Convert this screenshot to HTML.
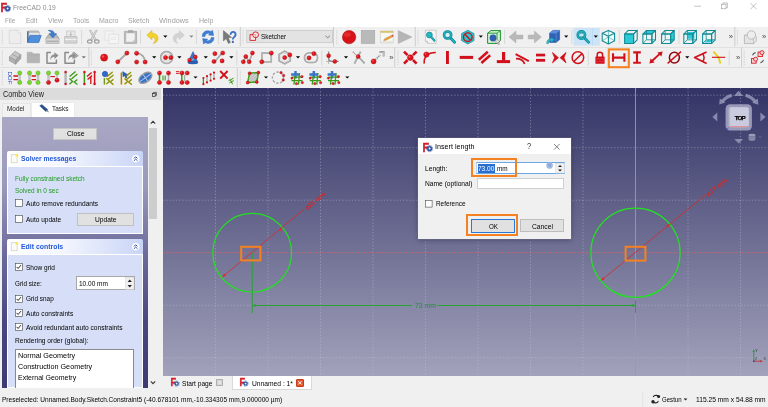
<!DOCTYPE html>
<html><head><meta charset="utf-8"><title>FreeCAD 0.19</title>
<style>
html,body{margin:0;padding:0;}
body{width:768px;height:407px;overflow:hidden;background:#f0f0f0;position:relative;font-family:"Liberation Sans",sans-serif;}
.a{position:absolute;box-sizing:border-box;}
.t{position:absolute;white-space:nowrap;transform-origin:0 50%;}
svg{position:absolute;overflow:visible;}
</style></head><body><div id="app" style="position:absolute;left:0;top:0;width:768px;height:407px;will-change:transform;">
<div class="a" style="left:0px;top:0px;width:768px;height:26.5px;background:#fff;"></div>
<svg style="left:1px;top:2px" width="10.0" height="10.0" viewBox="0 0 10 10"><text transform="translate(-0.5 9.6) scale(0.86 1)" font-family="Liberation Sans, sans-serif" font-weight="bold" font-size="12.6" fill="#d4202a" stroke="#d4202a" stroke-width="0.5">F</text><circle cx="6.6" cy="6.6" r="2.6" fill="#2f55a4"/><circle cx="6.6" cy="6.6" r="3.1" fill="none" stroke="#2f55a4" stroke-width="0.9" stroke-dasharray="1 0.9"/><circle cx="6.6" cy="6.6" r="1" fill="#fff"/></svg>
<span class="t" style="left:12.80px;top:3.00px;font-size:8.0px;line-height:9.60px;color:#8c8c8c;transform:scaleX(0.8351);">FreeCAD 0.19</span>
<span class="t" style="left:4.75px;top:16.00px;font-size:8.0px;line-height:9.60px;color:#a0a0a0;transform:scaleX(0.7952);">File</span>
<span class="t" style="left:25.75px;top:16.00px;font-size:8.0px;line-height:9.60px;color:#a0a0a0;transform:scaleX(0.8161);">Edit</span>
<span class="t" style="left:47.50px;top:16.00px;font-size:8.0px;line-height:9.60px;color:#a0a0a0;transform:scaleX(0.8723);">View</span>
<span class="t" style="left:72.50px;top:16.00px;font-size:8.0px;line-height:9.60px;color:#a0a0a0;transform:scaleX(0.8701);">Tools</span>
<span class="t" style="left:99.25px;top:16.00px;font-size:8.0px;line-height:9.60px;color:#a0a0a0;transform:scaleX(0.8774);">Macro</span>
<span class="t" style="left:128.25px;top:16.00px;font-size:8.0px;line-height:9.60px;color:#a0a0a0;transform:scaleX(0.8689);">Sketch</span>
<span class="t" style="left:159.25px;top:16.00px;font-size:8.0px;line-height:9.60px;color:#a0a0a0;transform:scaleX(0.9167);">Windows</span>
<span class="t" style="left:198.75px;top:16.00px;font-size:8.0px;line-height:9.60px;color:#a0a0a0;transform:scaleX(0.8813);">Help</span>
<svg style="left:0;top:0" width="768" height="14" viewBox="0 0 768 14" fill="none" stroke="#9a9a9a" stroke-width="0.6"><path d="M694.3 6.2H701"/><rect x="721.4" y="4.2" width="4.6" height="4.6"/><path d="M722.9 4.2V3H727.4V7.6H726"/><path d="M750.5 3.2L756.5 9.2M756.5 3.2L750.5 9.2"/></svg>
<div class="a" style="left:0px;top:26.5px;width:768px;height:61.5px;background:#f0f0f0;"></div>
<div class="a" style="left:0px;top:46.6px;width:768px;height:0.6000000000000014px;background:#e0e0e0;"></div>
<div class="a" style="left:0px;top:67.2px;width:768px;height:0.5999999999999943px;background:#e0e0e0;"></div>
<div class="a" style="left:0px;top:88px;width:161px;height:12px;background:#dcdcdc;"></div>
<span class="t" style="left:2.60px;top:90.00px;font-size:8.2px;line-height:9.84px;color:#222;transform:scaleX(0.8849);">Combo View</span>
<svg style="left:152.4px;top:92.2px" width="5" height="5" viewBox="0 0 7 7" fill="none" stroke="#333" stroke-width="1"><rect x="0.5" y="2.2" width="4" height="4"/><path d="M2 2.2V0.6H6.2V4.8H4.5"/></svg>
<div class="a" style="left:0px;top:100px;width:161px;height:17px;background:#f0f0f0;"></div>
<div class="a" style="left:31px;top:101.5px;width:44px;height:15.5px;background:#fff;border:0.5px solid #ebebeb;border-bottom:none;"></div>
<div class="a" style="left:1.5px;top:103px;width:29.5px;height:13.5px;background:#f2f2f2;border:0.5px solid #e6e6e6;border-bottom:none;"></div>
<span class="t" style="left:7.00px;top:104.00px;font-size:7.6px;line-height:9.12px;color:#222;transform:scaleX(0.8455);">Model</span>
<span class="t" style="left:51.50px;top:104.00px;font-size:7.8px;line-height:9.36px;color:#222;transform:scaleX(0.8276);">Tasks</span>
<svg style="left:39px;top:103.6px" width="11" height="10" viewBox="0 0 11 10"><path d="M0.6 1.8L2.8 0.4L8.8 5.6L6.6 7.4Z" fill="#2a4f8f" stroke="#1d3a70" stroke-width="0.3"/><path d="M7 7.2L8.6 5.8L10 8.4Z" fill="#8a8a8a"/></svg>
<div class="a" style="left:2px;top:117px;width:145.5px;height:270.5px;background:linear-gradient(#a9a8c4 0%,#9b99bb 25%,#6e6c9c 50%,#4b4880 75%,#3d3a72 100%);"></div>
<div class="a" style="left:147.5px;top:117px;width:10.0px;height:270.5px;background:#f0f0f0;"></div>
<div class="a" style="left:148.5px;top:127.5px;width:8.0px;height:91.5px;background:#cdcdcd;"></div>
<svg style="left:147.5px;top:117px" width="10" height="271" viewBox="0 0 10 271" fill="none" stroke="#3a3a3a" stroke-width="1.1"><path d="M2.8 6.6L5 4.4L7.2 6.6"/><path d="M2.8 264.4L5 266.6L7.2 264.4"/></svg>
<div class="a" style="left:53px;top:127.8px;width:43.8px;height:12.000000000000014px;background:#e1e1e1;border:0.5px solid #c4c4c4;"></div>
<span class="t" style="left:66.50px;top:129.00px;font-size:7.6px;line-height:9.12px;color:#000;transform:scaleX(0.9007);">Close</span>
<div class="a" style="left:7px;top:151px;width:135.5px;height:14.5px;background:linear-gradient(90deg,#ffffff 0%,#f4f6fe 40%,#c9d5f7 100%);border-radius:2px 2px 0 0;"></div>
<div class="a" style="left:7px;top:165.5px;width:135.5px;height:68.5px;background:#d6dff7;border:0.6px solid #fff;border-top:0.5px solid #fff;"></div>
<svg style="left:11px;top:153.65px" width="8" height="9" viewBox="0 0 8 9"><path d="M0.3 0.6H6.2V8.6H0.3Z" fill="#fbfbf6" stroke="#b9b9b0" stroke-width="0.5"/><path d="M4.6 0.2H7.2V2.6H4.6Z" fill="#f6ea4a"/></svg>
<span class="t" style="left:20.80px;top:154.00px;font-size:7.8px;line-height:9.36px;color:#2157d6;font-weight:bold;transform:scaleX(0.8661);">Solver messages</span>
<svg style="left:130.8px;top:153.75px" width="9.4" height="9.4" viewBox="0 0 8 8"><circle cx="4" cy="4" r="3.6" fill="#fff" stroke="#b7c6ee" stroke-width="0.5"/><path d="M2.5 3.8L4 2.3L5.5 3.8M2.5 5.8L4 4.3L5.5 5.8" fill="none" stroke="#1f3f9f" stroke-width="0.8"/></svg>
<div class="a" style="left:7px;top:239.4px;width:135.5px;height:14.400000000000006px;background:linear-gradient(90deg,#ffffff 0%,#f4f6fe 40%,#c9d5f7 100%);border-radius:2px 2px 0 0;"></div>
<div class="a" style="left:7px;top:253.8px;width:135.5px;height:134.2px;background:#d6dff7;border:0.6px solid #fff;border-top:0.5px solid #fff;"></div>
<svg style="left:11px;top:242.00000000000003px" width="8" height="9" viewBox="0 0 8 9"><path d="M0.3 0.6H6.2V8.6H0.3Z" fill="#fbfbf6" stroke="#b9b9b0" stroke-width="0.5"/><path d="M4.6 0.2H7.2V2.6H4.6Z" fill="#f6ea4a"/></svg>
<span class="t" style="left:20.80px;top:242.00px;font-size:7.8px;line-height:9.36px;color:#2157d6;font-weight:bold;transform:scaleX(0.8853);">Edit controls</span>
<svg style="left:130.8px;top:242.10000000000002px" width="9.4" height="9.4" viewBox="0 0 8 8"><circle cx="4" cy="4" r="3.6" fill="#fff" stroke="#b7c6ee" stroke-width="0.5"/><path d="M2.5 3.8L4 2.3L5.5 3.8M2.5 5.8L4 4.3L5.5 5.8" fill="none" stroke="#1f3f9f" stroke-width="0.8"/></svg>
<span class="t" style="left:14.80px;top:174.00px;font-size:7.6px;line-height:9.12px;color:#1f9a1f;transform:scaleX(0.8550);">Fully constrained sketch</span>
<span class="t" style="left:14.80px;top:186.00px;font-size:7.6px;line-height:9.12px;color:#1f9a1f;transform:scaleX(0.8479);">Solved in 0 sec</span>
<svg style="left:15.2px;top:198.79999999999998px" width="7.6" height="7.6" viewBox="0 0 7.6 7.6"><rect x="0.3" y="0.3" width="7" height="7" fill="#fff" stroke="#444" stroke-width="0.6"/></svg>
<span class="t" style="left:25.80px;top:199.00px;font-size:7.6px;line-height:9.12px;color:#000;transform:scaleX(0.8676);">Auto remove redundants</span>
<svg style="left:15.2px;top:214.79999999999998px" width="7.6" height="7.6" viewBox="0 0 7.6 7.6"><rect x="0.3" y="0.3" width="7" height="7" fill="#fff" stroke="#444" stroke-width="0.6"/></svg>
<span class="t" style="left:25.80px;top:215.00px;font-size:7.6px;line-height:9.12px;color:#000;transform:scaleX(0.8588);">Auto update</span>
<div class="a" style="left:77px;top:212.5px;width:57.19999999999999px;height:13.099999999999994px;background:#e1e1e1;border:0.5px solid #c0c0c0;"></div>
<span class="t" style="left:95.00px;top:215.00px;font-size:7.6px;line-height:9.12px;color:#000;transform:scaleX(0.8774);">Update</span>
<svg style="left:15.2px;top:263.2px" width="7.6" height="7.6" viewBox="0 0 7.6 7.6"><rect x="0.3" y="0.3" width="7" height="7" fill="#fff" stroke="#444" stroke-width="0.6"/><path d="M1.6 3.9L3.1 5.5L6 2.1" fill="none" stroke="#111" stroke-width="0.9"/></svg>
<span class="t" style="left:25.80px;top:263.00px;font-size:7.6px;line-height:9.12px;color:#000;transform:scaleX(0.8581);">Show grid</span>
<span class="t" style="left:14.80px;top:279.00px;font-size:7.6px;line-height:9.12px;color:#000;transform:scaleX(0.8319);">Grid size:</span>
<div class="a" style="left:76.3px;top:276.2px;width:58.500000000000014px;height:13.600000000000023px;background:#fff;border:0.5px solid #a8a8a8;"></div>
<span class="t" style="left:79.00px;top:279.00px;font-size:7.6px;line-height:9.12px;color:#000;transform:scaleX(0.8583);">10.00 mm</span>
<svg style="left:125px;top:277px" width="9.5" height="13" viewBox="0 0 9.5 13"><rect x="0.5" y="0.5" width="8.5" height="12" fill="#f0f0f0" stroke="#c8c8c8" stroke-width="0.4"/><path d="M2.6 4.9L4.75 2.4L6.9 4.9Z M2.6 8.1L4.75 10.6L6.9 8.1Z" fill="#222"/></svg>
<svg style="left:15.2px;top:294.59999999999997px" width="7.6" height="7.6" viewBox="0 0 7.6 7.6"><rect x="0.3" y="0.3" width="7" height="7" fill="#fff" stroke="#444" stroke-width="0.6"/><path d="M1.6 3.9L3.1 5.5L6 2.1" fill="none" stroke="#111" stroke-width="0.9"/></svg>
<span class="t" style="left:25.80px;top:294.00px;font-size:7.6px;line-height:9.12px;color:#000;transform:scaleX(0.8407);">Grid snap</span>
<svg style="left:15.2px;top:308.8px" width="7.6" height="7.6" viewBox="0 0 7.6 7.6"><rect x="0.3" y="0.3" width="7" height="7" fill="#fff" stroke="#444" stroke-width="0.6"/><path d="M1.6 3.9L3.1 5.5L6 2.1" fill="none" stroke="#111" stroke-width="0.9"/></svg>
<span class="t" style="left:25.80px;top:309.00px;font-size:7.6px;line-height:9.12px;color:#000;transform:scaleX(0.8662);">Auto constraints</span>
<svg style="left:15.2px;top:322.8px" width="7.6" height="7.6" viewBox="0 0 7.6 7.6"><rect x="0.3" y="0.3" width="7" height="7" fill="#fff" stroke="#444" stroke-width="0.6"/><path d="M1.6 3.9L3.1 5.5L6 2.1" fill="none" stroke="#111" stroke-width="0.9"/></svg>
<span class="t" style="left:25.80px;top:323.00px;font-size:7.6px;line-height:9.12px;color:#000;transform:scaleX(0.8696);">Avoid redundant auto constraints</span>
<span class="t" style="left:14.80px;top:336.00px;font-size:7.6px;line-height:9.12px;color:#000;transform:scaleX(0.8700);">Rendering order (global):</span>
<div class="a" style="left:15.3px;top:348.7px;width:119.2px;height:39.30000000000001px;background:#fff;border:0.5px solid #8a8a8a;border-bottom:none;"></div>
<span class="t" style="left:17.80px;top:351.00px;font-size:7.8px;line-height:9.36px;color:#000;transform:scaleX(0.9294);">Normal Geometry</span>
<span class="t" style="left:17.80px;top:362.00px;font-size:7.8px;line-height:9.36px;color:#000;transform:scaleX(0.9253);">Construction Geometry</span>
<span class="t" style="left:17.80px;top:373.00px;font-size:7.8px;line-height:9.36px;color:#000;transform:scaleX(0.8951);">External Geometry</span>
<div class="a" style="left:0px;top:387.6px;width:163px;height:19.399999999999977px;background:#f0f0f0;"></div>
<div class="a" style="left:0px;top:390px;width:768px;height:17px;background:#f0f0f0;"></div>
<span class="t" style="left:1.50px;top:396.00px;font-size:7.4px;line-height:8.88px;color:#000;transform:scaleX(0.8868);">Preselected: Unnamed.Body.Sketch.Constraint5 (-40.678101 mm,-10.334305 mm,9.000000 µm)</span>
<span class="t" style="left:696.00px;top:396.00px;font-size:7.4px;line-height:8.88px;color:#000;transform:scaleX(0.9031);">115.25 mm x 54.88 mm</span>
<span class="t" style="left:662.40px;top:396.00px;font-size:7.4px;line-height:8.88px;color:#000;transform:scaleX(0.8216);">Gestun</span>
<svg style="left:640px;top:392px" width="50" height="15" viewBox="0 0 50 15"><path d="M2.7 0V15" stroke="#dcdcdc" stroke-width="0.7"/><path d="M13.4 5.2C13 3.4 16.5 2.8 18.4 4M18 9C18.6 10.8 14.8 11.4 13 10.2" fill="none" stroke="#222" stroke-width="1.1"/><circle cx="18.6" cy="4.6" r="1.5" fill="#222"/><circle cx="13" cy="9.8" r="1.7" fill="#222"/><path d="M43.6 6.6H47.4L45.5 8.6Z" fill="#222"/></svg>
<div class="a" style="left:163px;top:376px;width:605px;height:14px;background:#f0f0f0;"></div>
<div class="a" style="left:231.5px;top:375.6px;width:80.10000000000002px;height:14.0px;background:#fff;border:0.5px solid #d9d9d9;border-top:none;"></div>
<svg style="left:170.5px;top:378.2px" width="8.5" height="8.5" viewBox="0 0 10 10"><text transform="translate(-0.5 9.6) scale(0.86 1)" font-family="Liberation Sans, sans-serif" font-weight="bold" font-size="12.6" fill="#d4202a" stroke="#d4202a" stroke-width="0.5">F</text><circle cx="6.6" cy="6.6" r="2.6" fill="#2f55a4"/><circle cx="6.6" cy="6.6" r="3.1" fill="none" stroke="#2f55a4" stroke-width="0.9" stroke-dasharray="1 0.9"/><circle cx="6.6" cy="6.6" r="1" fill="#fff"/></svg>
<span class="t" style="left:182.30px;top:380.00px;font-size:7.4px;line-height:8.88px;color:#000;transform:scaleX(0.8904);">Start page</span>
<div class="a" style="left:216px;top:379px;width:7.300000000000011px;height:7.399999999999977px;background:#d4d4d4;border:0.5px solid #b0b0b0;"></div>
<svg style="left:216px;top:379px" width="7.3" height="7.4" viewBox="0 0 7.3 7.4"><path d="M2.2 2.2L5.1 5.2M5.1 2.2L2.2 5.2" stroke="#f4f4f4" stroke-width="0.9"/></svg>
<svg style="left:240px;top:378.2px" width="8.5" height="8.5" viewBox="0 0 10 10"><text transform="translate(-0.5 9.6) scale(0.86 1)" font-family="Liberation Sans, sans-serif" font-weight="bold" font-size="12.6" fill="#d4202a" stroke="#d4202a" stroke-width="0.5">F</text><circle cx="6.6" cy="6.6" r="2.6" fill="#2f55a4"/><circle cx="6.6" cy="6.6" r="3.1" fill="none" stroke="#2f55a4" stroke-width="0.9" stroke-dasharray="1 0.9"/><circle cx="6.6" cy="6.6" r="1" fill="#fff"/></svg>
<span class="t" style="left:251.80px;top:380.00px;font-size:7.4px;line-height:8.88px;color:#000;transform:scaleX(0.9061);">Unnamed : 1*</span>
<div class="a" style="left:296px;top:379px;width:7.800000000000011px;height:7.600000000000023px;background:#e4572e;border:0.5px solid #c43c1a;border-radius:1px;"></div>
<svg style="left:296px;top:379px" width="7.8" height="7.6" viewBox="0 0 7.8 7.6"><path d="M2.3 2.2L5.5 5.4M5.5 2.2L2.3 5.4" stroke="#fff" stroke-width="1"/></svg>
<div class="a" style="left:163px;top:88px;width:605px;height:288px;background:linear-gradient(#333366 0%,#a2a2bb 100%);"></div>
<svg style="left:0;top:0" width="768" height="407" viewBox="0 0 768 407"><g stroke="#c2c2d8" stroke-opacity="0.62" stroke-width="0.7" stroke-dasharray="1.3 1.9" fill="none"><path d="M215.5 88V376"/><path d="M268.0 88V376"/><path d="M320.5 88V376"/><path d="M373.0 88V376"/><path d="M425.5 88V376"/><path d="M478.0 88V376"/><path d="M530.5 88V376"/><path d="M583.0 88V376"/><path d="M688.0 88V376"/><path d="M740.5 88V376"/><path d="M163 95.2H768"/><path d="M163 147.7H768"/><path d="M163 200.2H768"/><path d="M163 305.2H252.2M635.5 305.2H768"/><path d="M163 357.7H768"/></g><path d="M163 252.7H768" stroke="#e0605c" stroke-width="0.7" stroke-dasharray="1.8 1.2"/><path d="M635.5 88V376" stroke="#57c86a" stroke-width="0.9"/><circle cx="252.2" cy="252.7" r="39.4" fill="none" stroke="#22e022" stroke-width="1.25"/><circle cx="635.5" cy="252.7" r="44.6" fill="none" stroke="#22e022" stroke-width="1.25"/><g stroke="#d62a2a" stroke-width="0.8" fill="#e22"><path d="M222.4 276.9L304 209.2"/><path d="M222.4 276.9l3.4 -1.2l-1.8 -2.2Z" stroke="none"/><path d="M282 227.9l-3.4 1.2l1.8 2.2Z" stroke="none"/><path d="M601.3 280.4L705 195.3"/><path d="M601.3 280.4l3.4 -1.2l-1.8 -2.2Z" stroke="none"/><path d="M669.7 224.3l-3.4 1.2l1.8 2.2Z" stroke="none"/></g><text x="0" y="0" transform="translate(306.6 210.4) rotate(-38.5)" font-family="Liberation Sans, sans-serif" font-size="6.6" font-weight="bold" fill="#cc2c2c">⌀15 mm</text><text x="0" y="0" transform="translate(708.4 196.6) rotate(-38.5)" font-family="Liberation Sans, sans-serif" font-size="6.6" font-weight="bold" fill="#cc2c2c">⌀17 mm</text><g stroke="#27a432" stroke-width="1" fill="#27a432"><path d="M252.2 252.7V313"/><path d="M252.2 305.5H412.3"/><path d="M437.6 305.5H635.5"/><path d="M635.5 300V313" /><path d="M252.2 305.5l3.6 -1.5v3Z" stroke="none"/><path d="M635.5 305.5l-3.6 -1.5v3Z" stroke="none"/></g><text x="425.4" y="308" text-anchor="middle" font-family="Liberation Sans, sans-serif" font-size="7" fill="#22903a" textLength="21" lengthAdjust="spacingAndGlyphs">73 mm</text><path d="M250 246.8h3" stroke="#d33" stroke-width="0.8"/><path d="M633 246.8h3" stroke="#d33" stroke-width="0.8"/><g fill="none" stroke="#f58220" stroke-width="2"><rect x="241.2" y="246.8" width="19.2" height="13.6"/><rect x="625.6" y="246.8" width="19.8" height="13.8"/></g><g fill="#a6a6c6" fill-opacity="0.72" stroke="none"><path d="M738.5 90.8L733.9 95.9H743.1Z"/><path d="M738.7 143.4L734.3 138.9H743.1Z"/><path d="M712.4 117L717.3 112.4V121.5Z"/><path d="M765.6 117L760.4 112.4V121.5Z"/></g><g fill="none" stroke="#a6a6c6" stroke-opacity="0.72" stroke-width="3"><path d="M722.4 101.2A20 20 0 0 1 731.8 95.3"/><path d="M755.2 101.4A20 20 0 0 0 745.6 95.3"/></g><g fill="#a6a6c6" fill-opacity="0.72"><path d="M719.2 104.6L719.8 98.4L725.4 102.6Z"/><path d="M758.4 104.8L757.8 98.6L752.2 102.8Z"/></g><rect x="725.6" y="104.2" width="26.3" height="26.3" rx="4.5" fill="#b4b4d0" fill-opacity="0.78"/><rect x="729" y="107.4" width="19.5" height="19.6" rx="1.6" fill="#cfcfe2" fill-opacity="0.92" stroke="#e6e6f2" stroke-opacity="0.7" stroke-width="0.5"/><path d="M729.6 107.6V126.4" stroke="#5fdc6a" stroke-width="0.7"/><path d="M729.6 126.6H748" stroke="#ee7070" stroke-width="0.7"/><text x="739.7" y="119.6" text-anchor="middle" font-family="Liberation Sans, sans-serif" font-size="6.2" font-weight="bold" fill="#000" letter-spacing="-0.9" stroke="#000" stroke-width="0.25">TOP</text><path d="M728.4 127.8l-2.6 2.6" stroke="#2a2ae0" stroke-width="0.8"/><g><ellipse cx="752" cy="135.2" rx="3.4" ry="1.4" fill="#9c9cba"/><path d="M748.6 135.2V139.6A3.4 1.4 0 0 0 755.4 139.6V135.2A3.4 1.4 0 0 1 748.6 135.2Z" fill="#8686a6"/><path d="M758.2 136.2h3.6l-1.8 2Z" fill="#606082"/></g><path d="M753.8 351V361.2" stroke="#1a9a2a" stroke-width="0.8"/><path d="M753.8 361.2H761" stroke="#c22" stroke-width="0.8"/><path d="M753.8 349.6l-1.2 2.2h2.4Z" fill="#1a9a2a"/><path d="M762.6 361.2l-2.2 -1.2v2.4Z" fill="#c22"/><circle cx="753.8" cy="361.2" r="0.8" fill="#22c"/><text x="755.2" y="351.6" font-family="Liberation Sans, sans-serif" font-size="3.6" fill="#222">Y</text><text x="763.4" y="360.4" font-family="Liberation Sans, sans-serif" font-size="3.6" fill="#333">X</text><text x="755" y="360" font-family="Liberation Sans, sans-serif" font-size="3.2" fill="#333">Z</text></svg>
<div class="a" style="left:418px;top:137.6px;width:153.20000000000005px;height:101.4px;background:#f0f0f0;box-shadow:0 0 0 0.5px rgba(120,120,150,0.7),0 1px 5px rgba(0,0,20,0.35);"></div>
<div class="a" style="left:418px;top:137.6px;width:153.20000000000005px;height:16.900000000000006px;background:#fff;"></div>
<svg style="left:423px;top:141.5px" width="10.0" height="10.0" viewBox="0 0 10 10"><text transform="translate(-0.5 9.6) scale(0.86 1)" font-family="Liberation Sans, sans-serif" font-weight="bold" font-size="12.6" fill="#d4202a" stroke="#d4202a" stroke-width="0.5">F</text><circle cx="6.6" cy="6.6" r="2.6" fill="#2f55a4"/><circle cx="6.6" cy="6.6" r="3.1" fill="none" stroke="#2f55a4" stroke-width="0.9" stroke-dasharray="1 0.9"/><circle cx="6.6" cy="6.6" r="1" fill="#fff"/></svg>
<span class="t" style="left:434.50px;top:142.00px;font-size:7.8px;line-height:9.36px;color:#000;transform:scaleX(0.9202);">Insert length</span>
<span class="t" style="left:527.00px;top:141.00px;font-size:8.4px;line-height:10.08px;color:#333;transform:scaleX(0.8991);">?</span>
<svg style="left:553px;top:143px" width="8" height="8" viewBox="0 0 8 8"><path d="M1 1L6.6 6.6M6.6 1L1 6.6" stroke="#333" stroke-width="0.6"/></svg>
<span class="t" style="left:425.00px;top:164.00px;font-size:7.6px;line-height:9.12px;color:#000;transform:scaleX(0.8795);">Length:</span>
<div class="a" style="left:476px;top:162.2px;width:88.5px;height:11.800000000000011px;background:#fff;border:0.6px solid #6aa7e8;border-left-color:#b9d4f2;border-right-color:#b9d4f2;"></div>
<div class="a" style="left:477.6px;top:163.8px;width:17.299999999999955px;height:9.0px;background:#2a6fd0;"></div>
<span class="t" style="left:478.20px;top:164.00px;font-size:7.6px;line-height:9.12px;color:#fff;transform:scaleX(0.8571);">73.00</span>
<span class="t" style="left:497.00px;top:164.00px;font-size:7.6px;line-height:9.12px;color:#000;transform:scaleX(0.8451);">mm</span>
<svg style="left:545.5px;top:163.2px" width="19" height="10.5" viewBox="0 0 19 10.5"><circle cx="3.6" cy="2.4" r="3.1" fill="#b4c8e8" stroke="#8aa6d6" stroke-width="0.5"/><path d="M1.4 1.6h4.4M1.4 3.2h4.4M2.8 0v4.6M4.4 0v4.6" stroke="#5f86c8" stroke-width="0.4"/><rect x="9.7" y="0.3" width="8.6" height="9.8" fill="#f0f0f0" stroke="#c8c8c8" stroke-width="0.4"/><path d="M12 4L14 1.9L16 4Z M12 6.4L14 8.5L16 6.4Z" fill="#222"/></svg>
<span class="t" style="left:425.00px;top:179.00px;font-size:7.6px;line-height:9.12px;color:#000;transform:scaleX(0.8786);">Name (optional)</span>
<div class="a" style="left:476.7px;top:177.6px;width:87.80000000000001px;height:11.200000000000017px;background:#fff;border:0.5px solid #d0d0d0;"></div>
<svg style="left:425.4px;top:199.70000000000002px" width="7.4" height="7.4" viewBox="0 0 7.6 7.6"><rect x="0.3" y="0.3" width="7" height="7" fill="#fff" stroke="#444" stroke-width="0.6"/></svg>
<span class="t" style="left:436.00px;top:199.00px;font-size:7.6px;line-height:9.12px;color:#000;transform:scaleX(0.8414);">Reference</span>
<div class="a" style="left:471px;top:219.2px;width:44px;height:13.400000000000006px;background:#e1e1e1;border:0.8px solid #2a78d7;"></div>
<span class="t" style="left:488.50px;top:222.00px;font-size:7.6px;line-height:9.12px;color:#000;transform:scaleX(0.8196);">OK</span>
<div class="a" style="left:519.8px;top:219.4px;width:44.10000000000002px;height:13.099999999999994px;background:#e1e1e1;border:0.5px solid #bdbdbd;"></div>
<span class="t" style="left:531.50px;top:222.00px;font-size:7.6px;line-height:9.12px;color:#000;transform:scaleX(0.8877);">Cancel</span>
<div class="a" style="left:471px;top:157.9px;width:46.200000000000045px;height:19.5px;border:2.3px solid #f58220;"></div>
<div class="a" style="left:465.8px;top:214.2px;width:52.19999999999999px;height:22.200000000000017px;border:2.3px solid #f58220;"></div>
<svg style="left:0;top:0" width="768" height="88" viewBox="0 0 768 88"><path d="M2.3 30V45" stroke="#b8b8b8" stroke-width="0.7" stroke-dasharray="0.8 0.9"/><path d="M9.3 30.2H18.2L20.8 32.8V43.6H9.3Z" fill="#ededed" stroke="#cfcfcf" stroke-width="0.6"/><path d="M18.2 30.2V32.8H20.8" fill="#fafafa" stroke="#cfcfcf" stroke-width="0.5"/><path d="M28 31H38.5V41H28Z" fill="#c9c9c9" stroke="#8a8a8a" stroke-width="0.5"/><path d="M29 32.4H39.5V41H29Z" fill="#e6e6e6" stroke="#9a9a9a" stroke-width="0.4"/><path d="M27 31.2V42.6H38.6L41.3 35.4H30L28.4 38.6V31.2Z" fill="#3e74c0"/><path d="M27.6 42.6L30 35.4H41.3L38.8 42.6Z" fill="#4f8fdc" stroke="#2c5ea8" stroke-width="0.4"/><path d="M46 38.2L48.6 34.6H56.4L59 38.2V43.2H46Z" fill="#b9b9b9" stroke="#7d7d7d" stroke-width="0.5"/><path d="M46.4 38.6H58.6V42.8H46.4Z" fill="#d8d8d8"/><path d="M47 41.2H58" stroke="#8d8d8d" stroke-width="0.8"/><path d="M48.2 30.4C51.5 30 54 31 54.4 33.6H56.6L52.8 38L49 33.6H51.4C51 32 50 31 48.2 30.4Z" fill="#3f7fd0" stroke="#2558a0" stroke-width="0.4"/><path d="M66.6 31H75V37H66.6Z" fill="#e9e9e9" stroke="#b5b5b5" stroke-width="0.5"/><path d="M64.6 36.6H77V43.2H64.6Z" fill="#d5d5d5" stroke="#a5a5a5" stroke-width="0.5"/><path d="M65 39.4H76.6" stroke="#f4f4f4" stroke-width="1"/><path d="M70.8 32V35.4M69.4 34L70.8 35.6L72.2 34" stroke="#aaa" stroke-width="0.7" fill="none"/><path d="M81.6 30V44" stroke="#cfcfcf" stroke-width="0.7"/><g fill="#e2e2e2" stroke="#a2a2a2" stroke-width="0.6"><path d="M89.4 30.4L91 30.4L96.4 39.8L94.6 40Z"/><path d="M97.2 30.4L95.6 30.4L90.2 39.8L92 40Z"/></g><g fill="none" stroke="#9a9a9a" stroke-width="1.1"><ellipse cx="89.8" cy="41.6" rx="2.3" ry="1.7"/><ellipse cx="96.8" cy="41.6" rx="2.3" ry="1.7"/></g><path d="M105 31H113.6V40.4H105Z" fill="#f2f2f2" stroke="#dcdcdc" stroke-width="0.6"/><path d="M109 34.4H118.6V43.6H109Z" fill="#f5f5f5" stroke="#d6d6d6" stroke-width="0.6"/><path d="M111 37.4H116.4M111 39.4H116.4" stroke="#e0e0e0" stroke-width="0.6"/><path d="M124.4 31.4H136.6V43.4H124.4Z" fill="#bdbdbd" stroke="#9a9a9a" stroke-width="0.6"/><path d="M126 33H135V42H126Z" fill="#f1f1f1" stroke="#b5b5b5" stroke-width="0.4"/><path d="M128 30.2H133V32.6H128Z" fill="#a5a5a5"/><path d="M132 42L135 39V42Z" fill="#c9c9c9"/><path d="M140.5 30V44" stroke="#cfcfcf" stroke-width="0.7"/><path d="M146.8 35.2L152 30.6V33.2C156 33.2 158.2 35.6 158 38.8C157.8 41.4 155.8 43 153 43.4C155 42 155.6 40.2 154.8 38.8C154.2 37.6 153.2 37.2 152 37.2V39.8Z" fill="#f3d22a" stroke="#d2a90e" stroke-width="0.5"/><path d="M163.20000000000002 35.6H167.4L165.3 37.800000000000004Z" fill="#000"/><path d="M184.4 35.2L179.2 30.6V33.2C175.2 33.2 173 35.6 173.2 38.8C173.4 41.4 175.4 43 178.2 43.4C176.2 42 175.6 40.2 176.4 38.8C177 37.6 178 37.2 179.2 37.2V39.8Z" fill="#d3d3d3" stroke="#c2c2c2" stroke-width="0.4"/><path d="M189.3 35.6H193.5L191.4 37.800000000000004Z" fill="#8a8a8a"/><path d="M196.4 30V44" stroke="#cfcfcf" stroke-width="0.7"/><g fill="#3d7fd6" stroke="#2a5fae" stroke-width="0.4"><path d="M202.2 36.6C202.2 32.6 205 30.6 208.6 30.8L211 31.4L212.6 30.2L213.6 35.6L208.4 35L210 33.6C207.4 32.8 205.4 34 205 36.6Z"/><path d="M214 37.6C214 41.6 211.2 43.6 207.6 43.4L205.2 42.8L203.6 44L202.6 38.6L207.8 39.2L206.2 40.6C208.8 41.4 210.8 40.2 211.2 37.6Z"/></g><path d="M218.4 30V44" stroke="#cfcfcf" stroke-width="0.7"/><path d="M223.4 30.6L223.4 41L226.2 38.6L228.4 43.4L230.4 42.4L228.2 37.8L231.6 37.4Z" fill="#7a7a7a" stroke="#555" stroke-width="0.4"/><text transform="translate(233.2 42.8) scale(0.82 1)" text-anchor="middle" font-family="Liberation Sans, sans-serif" font-size="16.5" font-weight="bold" fill="#3a6fc4">?</text><path d="M240.3 27V46.4" stroke="#c4c4c4" stroke-width="0.8"/><path d="M243 30V45" stroke="#b8b8b8" stroke-width="0.7" stroke-dasharray="0.8 0.9"/><rect x="246.8" y="30.3" width="85.9" height="12.5" fill="#e3e3e3" stroke="#b5b5b5" stroke-width="0.5"/><g fill="none" stroke="#d21a22" stroke-width="0.9"><path d="M250 34.6H255.6V40.4H250Z" fill="#fbeaea"/><circle cx="255.6" cy="34.8" r="2.9" fill="#fbeaea" fill-opacity="0.6"/></g><path d="M325.4 35.6L327.7 37.9L330 35.6" fill="none" stroke="#555" stroke-width="0.7"/><path d="M333.5 27V46.4" stroke="#c4c4c4" stroke-width="0.8"/><path d="M336.8 30V45" stroke="#b8b8b8" stroke-width="0.7" stroke-dasharray="0.8 0.9"/><circle cx="349.1" cy="37.1" r="6.7" fill="#d81118" stroke="#a8080c" stroke-width="0.5"/><ellipse cx="347.4" cy="34.6" rx="3.6" ry="2.4" fill="#f04a4a" fill-opacity="0.45"/><rect x="361.2" y="30.4" width="13.6" height="13.2" fill="#b9b9b9" stroke="#a2a2a2" stroke-width="0.5"/><path d="M380.4 31H393.2V42.8H380.4Z" fill="#f7f7f3" stroke="#bdbdb2" stroke-width="0.5"/><path d="M380.4 31H393.2V32.8H380.4Z" fill="#d9c36a"/><path d="M384.6 38.8L391.6 35.2L392.8 36.8L385.6 40.4L383.6 40.6Z" fill="#e8a23a" stroke="#a8661a" stroke-width="0.3"/><path d="M391.6 35.2L392.4 34.6L393.6 36.2L392.8 36.8Z" fill="#d33"/><path d="M381.6 41.4H392" stroke="#d0d0c8" stroke-width="0.5"/><path d="M398.2 30.6L412 37.1L398.2 43.6Z" fill="#b5b5b5" stroke="#a5a5a5" stroke-width="0.4"/><path d="M415.3 27V46.4" stroke="#c4c4c4" stroke-width="0.8"/><path d="M418 30V45" stroke="#b8b8b8" stroke-width="0.7" stroke-dasharray="0.8 0.9"/><path d="M425.4 30.2H436.2V43.4H427.6L425.4 41.2Z" fill="#f4f4f4" stroke="#a8a8a8" stroke-width="0.5"/><path d="M425.4 41.2H427.6V43.4" fill="#d5d5d5" stroke="#a8a8a8" stroke-width="0.4"/><circle cx="429.4" cy="35" r="2.9" fill="#25b9c8" stroke="#0e808c" stroke-width="0.7"/><path d="M431.4 37.2L434.4 40.6" stroke="#0e808c" stroke-width="2.2" stroke-linecap="round"/><path d="M431.4 37.2L434.4 40.6" stroke="#25b9c8" stroke-width="1.2" stroke-linecap="round"/><path d="M450.1 37.5L454.6 42.2" stroke="#0f7f8c" stroke-width="2.8" stroke-linecap="round"/><path d="M450.1 37.5L454.6 42.2" stroke="#1fb0c0" stroke-width="1.8" stroke-linecap="round"/><circle cx="447.6" cy="35" r="3.6" fill="#bfeef2" fill-opacity="0.6" stroke="#0f7f8c" stroke-width="2.5"/><circle cx="447.6" cy="35" r="3.6" fill="none" stroke="#1fb0c0" stroke-width="1.5"/><path d="M467.8 30.2L474 33.6V40.6L467.8 44L461.6 40.6V33.6Z" fill="#2cc4d0" stroke="#0f8a96" stroke-width="0.7"/><circle cx="467.8" cy="37.2" r="4.3" fill="none" stroke="#c8141c" stroke-width="1.4"/><path d="M464.8 34.2L470.8 40.2" stroke="#c8141c" stroke-width="1.4"/><path d="M478.7 35.6H482.90000000000003L480.8 37.800000000000004Z" fill="#000"/><path d="M487.6 33.2L491 30.6H500.4V40.6L497 43.4H487.6Z" fill="#d8efd8" stroke="#18962a" stroke-width="1"/><path d="M487.6 33.2H497V43.4M497 33.2L500.4 30.6" fill="none" stroke="#18962a" stroke-width="0.9"/><circle cx="493" cy="38" r="3.4" fill="#2f5fae"/><path d="M496 38.6L496 43.8L497.4 42.6L498.4 44.6L499.4 44.2L498.4 42.2L500 42Z" fill="#eee" stroke="#555" stroke-width="0.4"/><path d="M504.6 30V44" stroke="#cfcfcf" stroke-width="0.7"/><path d="M509 37L516 31V35H523V39H516V43Z" fill="#b9b9b9" stroke="#a8a8a8" stroke-width="0.4"/><path d="M541.4 37L534.4 31V35H528.2V39H534.4V43Z" fill="#b9b9b9" stroke="#a8a8a8" stroke-width="0.4"/><path d="M549.6 33L553 30.4H559.6V39.6L556.2 42.4H549.6Z" fill="#2f62b4" stroke="#1d478e" stroke-width="0.5"/><path d="M549.6 33H556.2V42.4M556.2 33L559.6 30.4" fill="none" stroke="#6f9be0" stroke-width="0.6"/><path d="M549.6 33L553 30.4H559.6L556.2 33Z" fill="#5f8fe0"/><path d="M546.6 43.6C546.6 40.4 548.4 38.8 551 38.8V37.2L554.4 39.8L551 42.4V40.8C549.4 40.8 548.4 41.8 548.6 43.6Z" fill="#2ab6c6" stroke="#0f7f8c" stroke-width="0.4"/><path d="M564.1 35.6H568.3000000000001L566.2 37.800000000000004Z" fill="#000"/><path d="M571.8 30V44" stroke="#cfcfcf" stroke-width="0.7"/><rect x="573.4" y="28" width="26.4" height="17.6" fill="#cce4f7"/><path d="M592.5 28V45.6" stroke="#b5d4ee" stroke-width="0.6"/><path d="M584.0 37.6L588.6 42.2" stroke="#0f7f8c" stroke-width="2.8" stroke-linecap="round"/><path d="M584.0 37.6L588.6 42.2" stroke="#1fb0c0" stroke-width="1.8" stroke-linecap="round"/><circle cx="581.4" cy="35" r="3.7" fill="#bfeef2" fill-opacity="0.6" stroke="#0f7f8c" stroke-width="2.5"/><circle cx="581.4" cy="35" r="3.7" fill="none" stroke="#1fb0c0" stroke-width="1.5"/><path d="M579.6 34.4A2 2 0 0 1 583 34M583.2 35.8A2 2 0 0 1 579.8 36" fill="none" stroke="#0f7f8c" stroke-width="0.7"/><path d="M593.6999999999999 35.6H597.9L595.8 37.800000000000004Z" fill="#000"/><g fill="#f4fbfb" stroke="#118a96" stroke-width="1.1" stroke-linejoin="round"><path d="M608.4 30.4L614.6 33.2V40.8L608.4 44L602.2 40.8V33.2Z"/><path d="M602.2 33.2L608.4 36.2L614.6 33.2M608.4 36.2V44" fill="none"/></g><path d="M608.4 30.4V37L602.2 40.8M608.4 37L614.6 40.8" fill="none" stroke="#118a96" stroke-width="0.5"/><path d="M619.3 30V44" stroke="#cfcfcf" stroke-width="0.7"/><path d="M624.6 34H633.6V43.4H624.6Z" fill="#eafafa" fill-opacity="0.5"/><path d="M624.6 34H633.6V43.4H624.6Z" fill="#2ccad6"/><g fill="none" stroke="#118a96" stroke-width="1.05" stroke-linejoin="round"><path d="M624.6 34H633.6V43.4H624.6Z"/><path d="M624.6 34L628.2 30.4H637.2L633.6 34Z"/><path d="M633.6 34L637.2 30.4V39.8L633.6 43.4Z"/></g><path d="M642.9 34H651.9V43.4H642.9Z" fill="#eafafa" fill-opacity="0.5"/><path d="M642.9 34L646.5 30.4H655.5L651.9 34Z" fill="#2ccad6"/><g fill="none" stroke="#118a96" stroke-width="1.05" stroke-linejoin="round"><path d="M642.9 34H651.9V43.4H642.9Z"/><path d="M642.9 34L646.5 30.4H655.5L651.9 34Z"/><path d="M651.9 34L655.5 30.4V39.8L651.9 43.4Z"/></g><g fill="none" stroke="#118a96" stroke-width="0.8"><path d="M646.5 30.4V39.8H655.5"/><path d="M642.9 43.4L646.5 39.8"/></g><path d="M661.6 34H670.6V43.4H661.6Z" fill="#eafafa" fill-opacity="0.5"/><path d="M670.6 34L674.2 30.4V39.8L670.6 43.4Z" fill="#2ccad6"/><path d="M661.6 34L665.2 30.4H674.2L670.6 34Z" fill="#2ccad6" fill-opacity="0.0"/><g fill="none" stroke="#118a96" stroke-width="1.05" stroke-linejoin="round"><path d="M661.6 34H670.6V43.4H661.6Z"/><path d="M661.6 34L665.2 30.4H674.2L670.6 34Z"/><path d="M670.6 34L674.2 30.4V39.8L670.6 43.4Z"/></g><g fill="none" stroke="#118a96" stroke-width="0.8"><path d="M665.2 30.4V39.8H674.2"/><path d="M661.6 43.4L665.2 39.8"/></g><path d="M679 30V44" stroke="#cfcfcf" stroke-width="0.7"/><path d="M683.8000000000001 34H692.8000000000001V43.4H683.8000000000001Z" fill="#eafafa" fill-opacity="0.5"/><path d="M687.4000000000001 31.9H694.4000000000001V38.8H687.4000000000001Z" fill="#2ccad6"/><g fill="none" stroke="#118a96" stroke-width="1.05" stroke-linejoin="round"><path d="M683.8000000000001 34H692.8000000000001V43.4H683.8000000000001Z"/><path d="M683.8000000000001 34L687.4000000000001 30.4H696.4000000000001L692.8000000000001 34Z"/><path d="M692.8000000000001 34L696.4000000000001 30.4V39.8L692.8000000000001 43.4Z"/></g><g fill="none" stroke="#118a96" stroke-width="0.8"><path d="M687.4000000000001 30.4V39.8H696.4000000000001"/><path d="M683.8000000000001 43.4L687.4000000000001 39.8"/></g><path d="M702.6 34H711.6V43.4H702.6Z" fill="#eafafa" fill-opacity="0.5"/><path d="M704.1 42.4L707.2 39.8H713.7L710.1 42.4Z" fill="#2ccad6"/><g fill="none" stroke="#118a96" stroke-width="1.05" stroke-linejoin="round"><path d="M702.6 34H711.6V43.4H702.6Z"/><path d="M702.6 34L706.2 30.4H715.2L711.6 34Z"/><path d="M711.6 34L715.2 30.4V39.8L711.6 43.4Z"/></g><g fill="none" stroke="#118a96" stroke-width="0.8"><path d="M706.2 30.4V39.8H715.2"/><path d="M702.6 43.4L706.2 39.8"/></g><text x="730.9" y="39.3" text-anchor="middle" font-family="Liberation Sans, sans-serif" font-size="7.6" fill="#444">»</text><path d="M734.8 27V46.4" stroke="#c4c4c4" stroke-width="0.8"/><path d="M737.4 30V45" stroke="#b8b8b8" stroke-width="0.7" stroke-dasharray="0.8 0.9"/><g fill="#e4e4e4" stroke="#a8a8a8" stroke-width="0.7"><path d="M744.4 35H753.6V43.6H744.4Z"/><circle cx="751.4" cy="35" r="4.2" fill="#ededed"/><path d="M753.6 43.6L756.2 41.4V36.4" fill="none"/></g><text x="764" y="39.3" text-anchor="middle" font-family="Liberation Sans, sans-serif" font-size="7.6" fill="#444">»</text><path d="M2.3 50.5V65.5" stroke="#b8b8b8" stroke-width="0.7" stroke-dasharray="0.8 0.9"/><g fill="#c6c6c6" stroke="#8f8f8f" stroke-width="0.6" stroke-linejoin="round"><path d="M9.4 57L15 51.2L20.8 54.6L15.6 60.4Z"/><path d="M9.4 57V60.8L15.6 64.2V60.4Z" fill="#b2b2b2"/><path d="M15.6 60.4L20.8 54.6V58.4L15.6 64.2Z" fill="#a5a5a5"/><path d="M12.2 54.2L17.8 57.4" fill="none"/></g><path d="M27.2 52.2H32L33.2 53.8H39.6V62.8H27.2Z" fill="#b5b5b5" stroke="#a0a0a0" stroke-width="0.4"/><path d="M27.2 55H39.6" stroke="#a8a8a8" stroke-width="0.4"/><path d="M51 52.6H47V63.2H56.4V59.6" fill="none" stroke="#8a8a8a" stroke-width="1.5" stroke-linejoin="round"/><path d="M50.4 60C50.4 56 52 54.6 54.4 54.6V52.2L58.6 55.6L54.4 59V56.8C52.6 56.8 51.4 57.8 50.4 60Z" fill="#8f8f8f"/><path d="M69 52.6H65V63.2H74.4V59.6" fill="none" stroke="#8a8a8a" stroke-width="1.5" stroke-linejoin="round"/><path d="M68.4 60C68.4 56 70 54.6 72.4 54.6V52.2L76.6 55.6L72.4 59V56.8C70.6 56.8 69.4 57.8 68.4 60Z" fill="#8f8f8f"/><path d="M73.4 52L77.8 55.6L73.6 58.6" fill="none" stroke="#9a9a9a" stroke-width="1.2"/><path d="M81.7 56.2H85.89999999999999L83.8 58.400000000000006Z" fill="#777"/><path d="M88.9 47.4V67" stroke="#c4c4c4" stroke-width="0.8"/><path d="M91.3 50.5V65.5" stroke="#b8b8b8" stroke-width="0.7" stroke-dasharray="0.8 0.9"/><circle cx="104.1" cy="57.6" r="3.6" fill="#e01218" stroke="#a0080c" stroke-width="0.4"/><circle cx="103.02" cy="56.52" r="1.26" fill="#f66" fill-opacity="0.7"/><path d="M117.8 61.8L126.9 53.1" stroke="#8a8a8a" stroke-width="1.6"/><path d="M117.8 61.8L126.9 53.1" stroke="#e8e8e8" stroke-width="0.5"/><circle cx="117.8" cy="61.8" r="2.1" fill="#e01218" stroke="#a0080c" stroke-width="0.4"/><circle cx="117.17" cy="61.17" r="0.73" fill="#f66" fill-opacity="0.7"/><circle cx="126.9" cy="53.1" r="2.1" fill="#e01218" stroke="#a0080c" stroke-width="0.4"/><circle cx="126.27" cy="52.47" r="0.73" fill="#f66" fill-opacity="0.7"/><path d="M136.6 53.3A8.6 8.6 0 0 1 145.1 62" fill="none" stroke="#8a8a8a" stroke-width="1.5"/><path d="M136.6 53.3A8.6 8.6 0 0 1 145.1 62" fill="none" stroke="#e8e8e8" stroke-width="0.45"/><circle cx="136.6" cy="53.3" r="2.1" fill="#e01218" stroke="#a0080c" stroke-width="0.4"/><circle cx="135.97" cy="52.67" r="0.73" fill="#f66" fill-opacity="0.7"/><circle cx="136.6" cy="62" r="2.1" fill="#e01218" stroke="#a0080c" stroke-width="0.4"/><circle cx="135.97" cy="61.37" r="0.73" fill="#f66" fill-opacity="0.7"/><circle cx="145.1" cy="62" r="2.1" fill="#e01218" stroke="#a0080c" stroke-width="0.4"/><circle cx="144.47" cy="61.37" r="0.73" fill="#f66" fill-opacity="0.7"/><path d="M152.1 56.2H156.29999999999998L154.2 58.400000000000006Z" fill="#000"/><circle cx="166.6" cy="57.6" r="6" fill="none" stroke="#8a8a8a" stroke-width="1.5"/><circle cx="166.6" cy="57.6" r="6" fill="none" stroke="#e8e8e8" stroke-width="0.45"/><circle cx="166.6" cy="57.6" r="3.6" fill="none" stroke="#b8b8b8" stroke-width="0.5"/><circle cx="165.6" cy="57.6" r="2.1" fill="#e01218" stroke="#a0080c" stroke-width="0.4"/><circle cx="164.97" cy="56.97" r="0.73" fill="#f66" fill-opacity="0.7"/><circle cx="170.8" cy="57.6" r="2.1" fill="#e01218" stroke="#a0080c" stroke-width="0.4"/><circle cx="170.17" cy="56.97" r="0.73" fill="#f66" fill-opacity="0.7"/><path d="M177.3 56.2H181.5L179.4 58.400000000000006Z" fill="#000"/><path d="M193 51.6L198 62.4C196 64.4 189.6 64.4 187.8 62.4Z" fill="#3a74c8" stroke="#2352a0" stroke-width="0.5"/><ellipse cx="192.9" cy="62.4" rx="5.1" ry="1.7" fill="#2a5eb0"/><path d="M189.5 60.1C191.5 60.6 194.4 59.6 195.4 56.9" fill="none" stroke="#ddd" stroke-width="0.8"/><circle cx="189.5" cy="60.1" r="1.9" fill="#e01218" stroke="#a0080c" stroke-width="0.4"/><circle cx="188.93" cy="59.53" r="0.66" fill="#f66" fill-opacity="0.7"/><circle cx="195.4" cy="56.9" r="1.9" fill="#e01218" stroke="#a0080c" stroke-width="0.4"/><circle cx="194.83" cy="56.33" r="0.66" fill="#f66" fill-opacity="0.7"/><path d="M203.70000000000002 56.2H207.9L205.8 58.400000000000006Z" fill="#000"/><path d="M214 61.5C218 60 218.6 55 222.7 53" fill="none" stroke="#8a8a8a" stroke-width="1.5"/><path d="M214 61.5C218 60 218.6 55 222.7 53" fill="none" stroke="#e8e8e8" stroke-width="0.45"/><circle cx="214.9" cy="53.7" r="2.1" fill="#e01218" stroke="#a0080c" stroke-width="0.4"/><circle cx="214.27" cy="53.07" r="0.73" fill="#f66" fill-opacity="0.7"/><circle cx="222.7" cy="53" r="2.1" fill="#e01218" stroke="#a0080c" stroke-width="0.4"/><circle cx="222.07" cy="52.37" r="0.73" fill="#f66" fill-opacity="0.7"/><circle cx="214" cy="61.5" r="2.1" fill="#e01218" stroke="#a0080c" stroke-width="0.4"/><circle cx="213.37" cy="60.87" r="0.73" fill="#f66" fill-opacity="0.7"/><circle cx="222.1" cy="60.9" r="2.1" fill="#e01218" stroke="#a0080c" stroke-width="0.4"/><circle cx="221.47" cy="60.27" r="0.73" fill="#f66" fill-opacity="0.7"/><path d="M229.3 56.2H233.5L231.4 58.400000000000006Z" fill="#000"/><path d="M236.8 50.5V65.5" stroke="#cfcfcf" stroke-width="0.7"/><path d="M243.3 61.8L245.8 56.6L249.2 61.8L252.4 53" fill="none" stroke="#8a8a8a" stroke-width="1.4"/><path d="M243.3 61.8L245.8 56.6L249.2 61.8L252.4 53" fill="none" stroke="#e8e8e8" stroke-width="0.4"/><circle cx="243.3" cy="61.8" r="2" fill="#e01218" stroke="#a0080c" stroke-width="0.4"/><circle cx="242.70" cy="61.20" r="0.70" fill="#f66" fill-opacity="0.7"/><circle cx="245.8" cy="56.6" r="2" fill="#e01218" stroke="#a0080c" stroke-width="0.4"/><circle cx="245.20" cy="56.00" r="0.70" fill="#f66" fill-opacity="0.7"/><circle cx="249.2" cy="61.8" r="2" fill="#e01218" stroke="#a0080c" stroke-width="0.4"/><circle cx="248.60" cy="61.20" r="0.70" fill="#f66" fill-opacity="0.7"/><circle cx="252.4" cy="53" r="2" fill="#e01218" stroke="#a0080c" stroke-width="0.4"/><circle cx="251.80" cy="52.40" r="0.70" fill="#f66" fill-opacity="0.7"/><rect x="261.8" y="53.1" width="9.5" height="8.7" fill="none" stroke="#8a8a8a" stroke-width="1.5"/><rect x="261.8" y="53.1" width="9.5" height="8.7" fill="none" stroke="#e8e8e8" stroke-width="0.4"/><circle cx="261.8" cy="61.8" r="2.1" fill="#e01218" stroke="#a0080c" stroke-width="0.4"/><circle cx="261.17" cy="61.17" r="0.73" fill="#f66" fill-opacity="0.7"/><circle cx="271.3" cy="53.1" r="2.1" fill="#e01218" stroke="#a0080c" stroke-width="0.4"/><circle cx="270.67" cy="52.47" r="0.73" fill="#f66" fill-opacity="0.7"/><path d="M284.7 51.2L290.3 54.4V60.8L284.7 64L279.1 60.8V54.4Z" fill="none" stroke="#8a8a8a" stroke-width="1.5"/><path d="M284.7 51.2L290.3 54.4V60.8L284.7 64L279.1 60.8V54.4Z" fill="none" stroke="#e8e8e8" stroke-width="0.45"/><circle cx="284.7" cy="57.6" r="4.2" fill="none" stroke="#bdbdbd" stroke-width="0.4"/><circle cx="284.7" cy="57.6" r="2.1" fill="#e01218" stroke="#a0080c" stroke-width="0.4"/><circle cx="284.07" cy="56.97" r="0.73" fill="#f66" fill-opacity="0.7"/><circle cx="289.8" cy="54.9" r="2.1" fill="#e01218" stroke="#a0080c" stroke-width="0.4"/><circle cx="289.17" cy="54.27" r="0.73" fill="#f66" fill-opacity="0.7"/><path d="M295.9 56.2H300.1L298 58.400000000000006Z" fill="#000"/><rect x="304.4" y="52.8" width="13.2" height="9.8" rx="4.9" fill="none" stroke="#8a8a8a" stroke-width="1.5"/><rect x="304.4" y="52.8" width="13.2" height="9.8" rx="4.9" fill="none" stroke="#e8e8e8" stroke-width="0.45"/><circle cx="309" cy="57.9" r="2.1" fill="#e01218" stroke="#a0080c" stroke-width="0.4"/><circle cx="308.37" cy="57.27" r="0.73" fill="#f66" fill-opacity="0.7"/><circle cx="313.9" cy="53.7" r="2.1" fill="#e01218" stroke="#a0080c" stroke-width="0.4"/><circle cx="313.27" cy="53.07" r="0.73" fill="#f66" fill-opacity="0.7"/><path d="M321.8 50.5V65.5" stroke="#cfcfcf" stroke-width="0.7"/><path d="M328.6 51.6V58.6C328.6 60.4 329.8 61.4 331.6 61.4H338.6" fill="none" stroke="#8a8a8a" stroke-width="1.3"/><path d="M326 61.4H331M328.6 59V64" stroke="#999" stroke-width="0.6"/><circle cx="328.6" cy="55.7" r="2" fill="#e01218" stroke="#a0080c" stroke-width="0.4"/><circle cx="328.00" cy="55.10" r="0.70" fill="#f66" fill-opacity="0.7"/><circle cx="334.8" cy="61.4" r="2" fill="#e01218" stroke="#a0080c" stroke-width="0.4"/><circle cx="334.20" cy="60.80" r="0.70" fill="#f66" fill-opacity="0.7"/><path d="M343.9 56.2H348.1L346 58.400000000000006Z" fill="#000"/><path d="M360.6 51.6L354.4 63.6" stroke="#8a8a8a" stroke-width="1.6"/><path d="M360.6 51.6L354.4 63.6" stroke="#eee" stroke-width="0.5"/><path d="M352.8 51.8L356.6 55.2" stroke="#8a8a8a" stroke-width="1.2" stroke-dasharray="1 0.8"/><path d="M359.4 57.8L364.6 63.4" stroke="#8a8a8a" stroke-width="1.6"/><path d="M359.4 57.8L364.6 63.4" stroke="#eee" stroke-width="0.5"/><circle cx="358.2" cy="56.6" r="2" fill="#e01218" stroke="#a0080c" stroke-width="0.4"/><circle cx="357.60" cy="56.00" r="0.70" fill="#f66" fill-opacity="0.7"/><path d="M375.4 59.6L380.2 55" stroke="#8a8a8a" stroke-width="1.6" stroke-dasharray="1.2 0.8"/><path d="M379.4 52H383.6V56.4" fill="none" stroke="#8a8a8a" stroke-width="1.8"/><path d="M379.4 52H383.6V56.4" fill="none" stroke="#eee" stroke-width="0.6"/><circle cx="373.6" cy="61.4" r="2.5" fill="#e01218" stroke="#a0080c" stroke-width="0.4"/><circle cx="372.85" cy="60.65" r="0.88" fill="#f66" fill-opacity="0.7"/><text x="391.4" y="60.2" text-anchor="middle" font-family="Liberation Sans, sans-serif" font-size="7.6" fill="#444">»</text><path d="M394.7 47.4V67" stroke="#c4c4c4" stroke-width="0.8"/><path d="M398 50.5V65.5" stroke="#b8b8b8" stroke-width="0.7" stroke-dasharray="0.8 0.9"/><g stroke="#d0101a" stroke-width="2.6" stroke-linecap="butt"><path d="M404 51.6L407.6 55.2M416.6 51.6L413 55.2M404 63.6L407.6 60M416.6 63.6L413 60"/></g><circle cx="410.3" cy="57.6" r="2.9" fill="#e01218" stroke="#a0080c" stroke-width="0.4"/><circle cx="409.43" cy="56.73" r="1.01" fill="#f66" fill-opacity="0.7"/><path d="M424.2 63.6C423.6 56.6 427.6 52.6 435.8 52.6" fill="none" stroke="#d0101a" stroke-width="1.5"/><circle cx="426.4" cy="54.6" r="2.7" fill="#e01218" stroke="#a0080c" stroke-width="0.4"/><circle cx="425.59" cy="53.79" r="0.94" fill="#f66" fill-opacity="0.7"/><rect x="446" y="51" width="2.9" height="13" fill="#d0101a"/><rect x="459.7" y="55.9" width="13.4" height="3" fill="#d0101a"/><g stroke="#d0101a" stroke-width="2.5"><path d="M478.8 59.8L487.8 51.8M481.4 63L490.2 55.2"/></g><rect x="496.8" y="60.1" width="13.3" height="3" fill="#d0101a"/><rect x="502" y="52" width="3.2" height="8.5" fill="#d0101a"/><path d="M515.6 54.2L528.8 61.2" stroke="#d0101a" stroke-width="1.9"/><path d="M516 58.6C520 58.6 523.6 60.6 524.6 64" fill="none" stroke="#d0101a" stroke-width="1.6"/><rect x="536" y="53.7" width="9.1" height="2.7" fill="#d0101a"/><rect x="536" y="58.9" width="9.1" height="2.8" fill="#d0101a"/><path d="M552.5 52.6L558.4 57.7L552.5 62.8L554.6 57.7Z M566 52.6L560.1 57.7L566 62.8L563.9 57.7Z" fill="#d0101a" stroke="#d0101a" stroke-width="0.8" stroke-linejoin="round"/><circle cx="577.9" cy="57.6" r="5.8" fill="none" stroke="#d0101a" stroke-width="1.5"/><path d="M573.6 61.8L582.2 53.4" stroke="#d0101a" stroke-width="1.5"/><path d="M588.3 50.5V65.5" stroke="#cfcfcf" stroke-width="0.7"/><path d="M597.2 57V54.8C597.2 51.4 602.6 51.4 602.6 54.8V57" fill="none" stroke="#d0101a" stroke-width="1.5"/><rect x="595.4" y="56.6" width="9.2" height="7.2" rx="0.6" fill="#d0101a"/><path d="M596 59H604M596 61.4H604" stroke="#f25a5a" stroke-width="0.5"/><g stroke="#d0101a" stroke-width="2.1"><path d="M613 53.3V61.8M624.4 53.3V61.8M613 57.6H624.4"/></g><rect x="608.8" y="49.4" width="20" height="17.8" fill="none" stroke="#f58220" stroke-width="2.1"/><g stroke="#d0101a" stroke-width="2.1"><path d="M633.2 52.4H640.8M633.2 62.8H640.8M637 52.4V62.8"/></g><path d="M652 61L660 53.6" stroke="#d0101a" stroke-width="1.9"/><path d="M662.6 51.4L661.4 56.6L657.4 52.6Z M649.4 63.6L650.6 58.4L654.6 62.4Z" fill="#d0101a"/><ellipse cx="674.4" cy="57.6" rx="5" ry="5.4" fill="none" stroke="#8a0a10" stroke-width="1.5"/><path d="M667.6 63.4L681 51.6" stroke="#d0101a" stroke-width="1.4"/><path d="M685.1999999999999 56.2H689.4L687.3 58.400000000000006Z" fill="#000"/><path d="M706.6 52L694.6 57.6L706.6 63.4" fill="none" stroke="#d0101a" stroke-width="1.7" stroke-linejoin="round"/><path d="M702.4 53.6C704.6 56 704.6 59.6 702.6 61.6" fill="none" stroke="#d0101a" stroke-width="1.5"/><path d="M713.4 51.6L718.6 57.4L720.4 63.6" fill="none" stroke="#e8cf1a" stroke-width="1.9" stroke-linejoin="round"/><path d="M712 57.3H725.2" stroke="#d0101a" stroke-width="1.1"/><path d="M729.2 50.5V65.5" stroke="#cfcfcf" stroke-width="0.7"/><text x="738" y="60.2" text-anchor="middle" font-family="Liberation Sans, sans-serif" font-size="7.6" fill="#444">»</text><path d="M741.6 47.4V67" stroke="#c4c4c4" stroke-width="0.8"/><path d="M744.2 50.5V65.5" stroke="#b8b8b8" stroke-width="0.7" stroke-dasharray="0.8 0.9"/><g fill="#f6d0d0" stroke="#d0101a" stroke-width="0.8"><rect x="758" y="52" width="4.6" height="4.6"/><circle cx="762" cy="52.6" r="2" /><rect x="751.6" y="58.6" width="4.6" height="4.6"/><circle cx="755.6" cy="59.2" r="2"/></g><path d="M752.6 55.4C753 53.6 754 52.8 755.6 52.6M763.4 59.8C763 61.6 762 62.4 760.4 62.6" fill="none" stroke="#555" stroke-width="1.1"/><path d="M2.3 70.5V85.5" stroke="#b8b8b8" stroke-width="0.7" stroke-dasharray="0.8 0.9"/><text transform="translate(8.2 71.4) rotate(90)" font-family="Liberation Sans, sans-serif" font-size="5" fill="#2a4fc0" textLength="13" lengthAdjust="spacingAndGlyphs">DOF</text><path d="M13.4 76H18M13.4 79.6H18" stroke="#d0101a" stroke-width="1.3"/><path d="M19.6 73V82.5" stroke="#c4c4c4" stroke-width="2.6"/><circle cx="19.7" cy="73" r="2.1" fill="#7ad82c" stroke="#3f9a10" stroke-width="0.4"/><circle cx="19.7" cy="82.5" r="2.1" fill="#7ad82c" stroke="#3f9a10" stroke-width="0.4"/><path d="M29.5 73V82.5M38 73V82.5" stroke="#c4c4c4" stroke-width="2.6"/><path d="M31.6 76H36M31.6 79.6H36" stroke="#d0101a" stroke-width="1.3"/><circle cx="29.5" cy="73" r="2.1" fill="#7ad82c" stroke="#3f9a10" stroke-width="0.4"/><circle cx="38" cy="73" r="2.1" fill="#7ad82c" stroke="#3f9a10" stroke-width="0.4"/><circle cx="29.5" cy="82.5" r="2.1" fill="#7ad82c" stroke="#3f9a10" stroke-width="0.4"/><circle cx="38" cy="82.5" r="2.1" fill="#7ad82c" stroke="#3f9a10" stroke-width="0.4"/><path d="M48.5 73V82.5" stroke="#c4c4c4" stroke-width="2.6"/><path d="M57 73V80" stroke="#999" stroke-width="0.8"/><path d="M50.4 76.6H55" stroke="#d0101a" stroke-width="1.1"/><circle cx="48.5" cy="73" r="2.1" fill="#7ad82c" stroke="#3f9a10" stroke-width="0.4"/><circle cx="57" cy="73" r="2.1" fill="#7ad82c" stroke="#3f9a10" stroke-width="0.4"/><circle cx="48.5" cy="82.5" r="2.1" fill="#e01218" stroke="#a0080c" stroke-width="0.4"/><circle cx="47.87" cy="81.87" r="0.73" fill="#f66" fill-opacity="0.7"/><circle cx="57" cy="80.2" r="2.1" fill="#e01218" stroke="#a0080c" stroke-width="0.4"/><circle cx="56.37" cy="79.57" r="0.73" fill="#f66" fill-opacity="0.7"/><path d="M65.6 72V84" stroke="#b5b5b5" stroke-width="2.4"/><circle cx="65.6" cy="72" r="1.2" fill="#d0101a"/><circle cx="65.6" cy="84" r="1.2" fill="#d0101a"/><g stroke="#3a9a18" stroke-width="1.3" fill="none"><path d="M69.6 76.4L75.6 71.4M71.4 79L77.4 74M69.4 78.6L72.6 81.4L69.4 84.2M77.4 79.4L74.2 82L77.4 84.6"/></g><path d="M84.4 72V84" stroke="#3a9a18" stroke-width="1.5"/><path d="M94.6 72V84" stroke="#d0101a" stroke-width="1.5"/><g fill="#d0101a"><circle cx="84.4" cy="72" r="1.2"/><circle cx="84.4" cy="84" r="1.2"/><circle cx="94.6" cy="72" r="1.2"/><circle cx="94.6" cy="84" r="1.2"/></g><path d="M87 76.6L91.6 72.4M87.6 79.6L92 75.6" stroke="#d0101a" stroke-width="1.3"/><path d="M90.8 77V84" stroke="#d0101a" stroke-width="1.3"/><g stroke="#e0a020" stroke-width="1.6" fill="none"><path d="M107 76.6L112.6 72M108 79.4L113.4 75M104.4 78V84.4M106.4 78.4L109.6 81.2L106.4 84M113.4 79.4L110.2 82L113.4 84.6"/></g><g stroke="#3a9a18" stroke-width="0.8" fill="none"><path d="M107 76.6L112.6 72M108 79.4L113.4 75M104.4 78V84.4M106.4 78.4L109.6 81.2L106.4 84M113.4 79.4L110.2 82L113.4 84.6"/></g><circle cx="105" cy="74" r="2.7" fill="#2a6fd0" stroke="#1a3f90" stroke-width="0.5"/><g stroke="#e0a020" stroke-width="1.6" fill="none"><path d="M121.4 72.6V84.4M125.4 76.8L131 72.2M126.4 79.6L131.8 75.2M124.6 78.6L127.8 81.4L124.6 84.2M131.8 79.4L128.6 82L131.8 84.6"/></g><g stroke="#3a9a18" stroke-width="0.8" fill="none"><path d="M121.4 72.6V84.4M125.4 76.8L131 72.2M126.4 79.6L131.8 75.2M124.6 78.6L127.8 81.4L124.6 84.2M131.8 79.4L128.6 82L131.8 84.6"/></g><path d="M122.6 71.4L127.6 74.4L125.6 75L127 77.6L125.8 78.2L124.4 75.6L123 77Z" fill="#1f5fc8" stroke="#123a80" stroke-width="0.3"/><g transform="rotate(-35 145.4 77.8)"><ellipse cx="145.4" cy="77.8" rx="7.4" ry="4.4" fill="#3a74c8" stroke="#9a9a9a" stroke-width="1.3"/><path d="M138 77.8H152.8M145.4 73.4V82.2" stroke="#d8e4f4" stroke-width="0.7"/></g><path d="M159.5 73V82.5" stroke="#3a9a18" stroke-width="1.5"/><path d="M168.5 73V82.5" stroke="#aaa" stroke-width="1.5"/><path d="M163 75.4V80.4M165.2 75.4V80.4" stroke="#3a9a18" stroke-width="1.1"/><circle cx="159.5" cy="73" r="2.1" fill="#e01218" stroke="#a0080c" stroke-width="0.4"/><circle cx="158.87" cy="72.37" r="0.73" fill="#f66" fill-opacity="0.7"/><circle cx="168.5" cy="73" r="2.1" fill="#e01218" stroke="#a0080c" stroke-width="0.4"/><circle cx="167.87" cy="72.37" r="0.73" fill="#f66" fill-opacity="0.7"/><circle cx="159.5" cy="82.5" r="2.1" fill="#e01218" stroke="#a0080c" stroke-width="0.4"/><circle cx="158.87" cy="81.87" r="0.73" fill="#f66" fill-opacity="0.7"/><circle cx="168.5" cy="82.5" r="2.1" fill="#e01218" stroke="#a0080c" stroke-width="0.4"/><circle cx="167.87" cy="81.87" r="0.73" fill="#f66" fill-opacity="0.7"/><path d="M181.8 73V82.5" stroke="#3a9a18" stroke-width="1.5"/><path d="M184.6 75V81" stroke="#aaa" stroke-width="1.3"/><path d="M176 71.6H179.4M176 73.4H179.4" stroke="#d0101a" stroke-width="0.9"/><circle cx="182" cy="73" r="2.1" fill="#e01218" stroke="#a0080c" stroke-width="0.4"/><circle cx="181.37" cy="72.37" r="0.73" fill="#f66" fill-opacity="0.7"/><circle cx="187.2" cy="73" r="2.1" fill="#e01218" stroke="#a0080c" stroke-width="0.4"/><circle cx="186.57" cy="72.37" r="0.73" fill="#f66" fill-opacity="0.7"/><circle cx="182" cy="82.5" r="2.1" fill="#e01218" stroke="#a0080c" stroke-width="0.4"/><circle cx="181.37" cy="81.87" r="0.73" fill="#f66" fill-opacity="0.7"/><circle cx="187.2" cy="82.5" r="2.1" fill="#e01218" stroke="#a0080c" stroke-width="0.4"/><circle cx="186.57" cy="81.87" r="0.73" fill="#f66" fill-opacity="0.7"/><path d="M193.4 76.4H197.6L195.5 78.60000000000001Z" fill="#000"/><path d="M203.4 78.4V84" stroke="#3a9a18" stroke-width="1.3"/><circle cx="203.4" cy="78" r="1.1" fill="#d0101a"/><circle cx="203.4" cy="84.2" r="1.1" fill="#d0101a"/><path d="M207 76.60000000000001V82.2" stroke="#aaa" stroke-width="1.3"/><circle cx="207" cy="76.2" r="1.1" fill="#d0101a"/><circle cx="207" cy="82.4" r="1.1" fill="#d0101a"/><path d="M210.6 74.80000000000001V80.4" stroke="#aaa" stroke-width="1.3"/><circle cx="210.6" cy="74.4" r="1.1" fill="#d0101a"/><circle cx="210.6" cy="80.60000000000001" r="1.1" fill="#d0101a"/><path d="M214 73.0V78.6" stroke="#aaa" stroke-width="1.3"/><circle cx="214" cy="72.6" r="1.1" fill="#d0101a"/><circle cx="214" cy="78.8" r="1.1" fill="#d0101a"/><path d="M220.2 71L227.6 78.6M227.6 71L220.2 78.6" stroke="#d0101a" stroke-width="1.9"/><g stroke="#3a9a18" stroke-width="1" fill="none"><path d="M228.6 80.6L233.6 78.2M229.4 82.8L233.8 80.6M230.2 79.4L232.6 84.4"/></g><path d="M237.3 68V87.4" stroke="#c4c4c4" stroke-width="0.8"/><path d="M240.3 70.5V85.5" stroke="#b8b8b8" stroke-width="0.7" stroke-dasharray="0.8 0.9"/><path d="M247.6 82.6L249.6 73.2L258.4 72.6L256.8 82Z" fill="#bdbdbd" stroke="#3a9a18" stroke-width="1.5"/><path d="M249 81L257 74M251 82L257.6 76.4M248.6 78.6L254 73.6" stroke="#eee" stroke-width="0.5"/><circle cx="247.6" cy="82.6" r="1.5" fill="#e01218" stroke="#a0080c" stroke-width="0.4"/><circle cx="247.15" cy="82.15" r="0.52" fill="#f66" fill-opacity="0.7"/><circle cx="249.6" cy="73.2" r="1.5" fill="#e01218" stroke="#a0080c" stroke-width="0.4"/><circle cx="249.15" cy="72.75" r="0.52" fill="#f66" fill-opacity="0.7"/><circle cx="258.4" cy="72.6" r="1.5" fill="#e01218" stroke="#a0080c" stroke-width="0.4"/><circle cx="257.95" cy="72.15" r="0.52" fill="#f66" fill-opacity="0.7"/><circle cx="256.8" cy="82" r="1.5" fill="#e01218" stroke="#a0080c" stroke-width="0.4"/><circle cx="256.35" cy="81.55" r="0.52" fill="#f66" fill-opacity="0.7"/><path d="M263.9 76.4H268.1L266 78.60000000000001Z" fill="#000"/><circle cx="278" cy="77.6" r="5.6" fill="none" stroke="#8a8a8a" stroke-width="1.3" stroke-dasharray="2.4 1.6"/><circle cx="278" cy="77.6" r="5.6" fill="none" stroke="#f0f0f0" stroke-width="0.4" stroke-dasharray="2.4 1.6"/><circle cx="281" cy="72.6" r="1.2" fill="#e01218" stroke="#a0080c" stroke-width="0.4"/><circle cx="280.64" cy="72.24" r="0.42" fill="#f66" fill-opacity="0.7"/><circle cx="283.6" cy="75.4" r="1.2" fill="#e01218" stroke="#a0080c" stroke-width="0.4"/><circle cx="283.24" cy="75.04" r="0.42" fill="#f66" fill-opacity="0.7"/><circle cx="283.2" cy="80" r="1.2" fill="#e01218" stroke="#a0080c" stroke-width="0.4"/><circle cx="282.84" cy="79.64" r="0.42" fill="#f66" fill-opacity="0.7"/><path d="M291.1 74.6H299.9M295.5 71V78.4" stroke="#3a74c8" stroke-width="2.5"/><g stroke="#3a9a18" stroke-width="1.3"><path d="M291.5 80.6H302.5M292.1 77.2H302.5M294.9 76.6L293.9 84.6M299.5 73L298.5 84.6"/></g><circle cx="301.9" cy="76.6" r="1.2" fill="#e01218" stroke="#a0080c" stroke-width="0.4"/><circle cx="301.54" cy="76.24" r="0.42" fill="#f66" fill-opacity="0.7"/><circle cx="302.3" cy="82.6" r="1.2" fill="#e01218" stroke="#a0080c" stroke-width="0.4"/><circle cx="301.94" cy="82.24" r="0.42" fill="#f66" fill-opacity="0.7"/><circle cx="296.5" cy="83.6" r="1.2" fill="#e01218" stroke="#a0080c" stroke-width="0.4"/><circle cx="296.14" cy="83.24" r="0.42" fill="#f66" fill-opacity="0.7"/><circle cx="291.9" cy="78.2" r="1.1" fill="#e01218" stroke="#a0080c" stroke-width="0.4"/><circle cx="291.57" cy="77.87" r="0.39" fill="#f66" fill-opacity="0.7"/><path d="M309.40000000000003 74.6H318.2M313.8 71V78.4" stroke="#3a74c8" stroke-width="2.5"/><g stroke="#3a9a18" stroke-width="1.3"><path d="M309.8 80.6H320.8M310.40000000000003 77.2H320.8M313.2 76.6L312.2 84.6M317.8 73L316.8 84.6"/></g><circle cx="320.2" cy="76.6" r="1.2" fill="#e01218" stroke="#a0080c" stroke-width="0.4"/><circle cx="319.84" cy="76.24" r="0.42" fill="#f66" fill-opacity="0.7"/><circle cx="320.6" cy="82.6" r="1.2" fill="#e01218" stroke="#a0080c" stroke-width="0.4"/><circle cx="320.24" cy="82.24" r="0.42" fill="#f66" fill-opacity="0.7"/><circle cx="314.8" cy="83.6" r="1.2" fill="#e01218" stroke="#a0080c" stroke-width="0.4"/><circle cx="314.44" cy="83.24" r="0.42" fill="#f66" fill-opacity="0.7"/><circle cx="310.2" cy="78.2" r="1.1" fill="#e01218" stroke="#a0080c" stroke-width="0.4"/><circle cx="309.87" cy="77.87" r="0.39" fill="#f66" fill-opacity="0.7"/><path d="M327.6 74.6H336.4M332 71V78.4" stroke="#3a74c8" stroke-width="2.5"/><g stroke="#3a9a18" stroke-width="1.3"><path d="M328 80.6H339M328.6 77.2H339M331.4 76.6L330.4 84.6M336 73L335 84.6"/></g><circle cx="338.4" cy="76.6" r="1.2" fill="#e01218" stroke="#a0080c" stroke-width="0.4"/><circle cx="338.04" cy="76.24" r="0.42" fill="#f66" fill-opacity="0.7"/><circle cx="338.8" cy="82.6" r="1.2" fill="#e01218" stroke="#a0080c" stroke-width="0.4"/><circle cx="338.44" cy="82.24" r="0.42" fill="#f66" fill-opacity="0.7"/><circle cx="333" cy="83.6" r="1.2" fill="#e01218" stroke="#a0080c" stroke-width="0.4"/><circle cx="332.64" cy="83.24" r="0.42" fill="#f66" fill-opacity="0.7"/><circle cx="328.4" cy="78.2" r="1.1" fill="#e01218" stroke="#a0080c" stroke-width="0.4"/><circle cx="328.07" cy="77.87" r="0.39" fill="#f66" fill-opacity="0.7"/><path d="M345.2 76.4H349.40000000000003L347.3 78.60000000000001Z" fill="#000"/></svg>
<span class="t" style="left:260.90px;top:32.00px;font-size:7.8px;line-height:9.36px;color:#000;transform:scaleX(0.8155);">Sketcher</span>
</div></body></html>
